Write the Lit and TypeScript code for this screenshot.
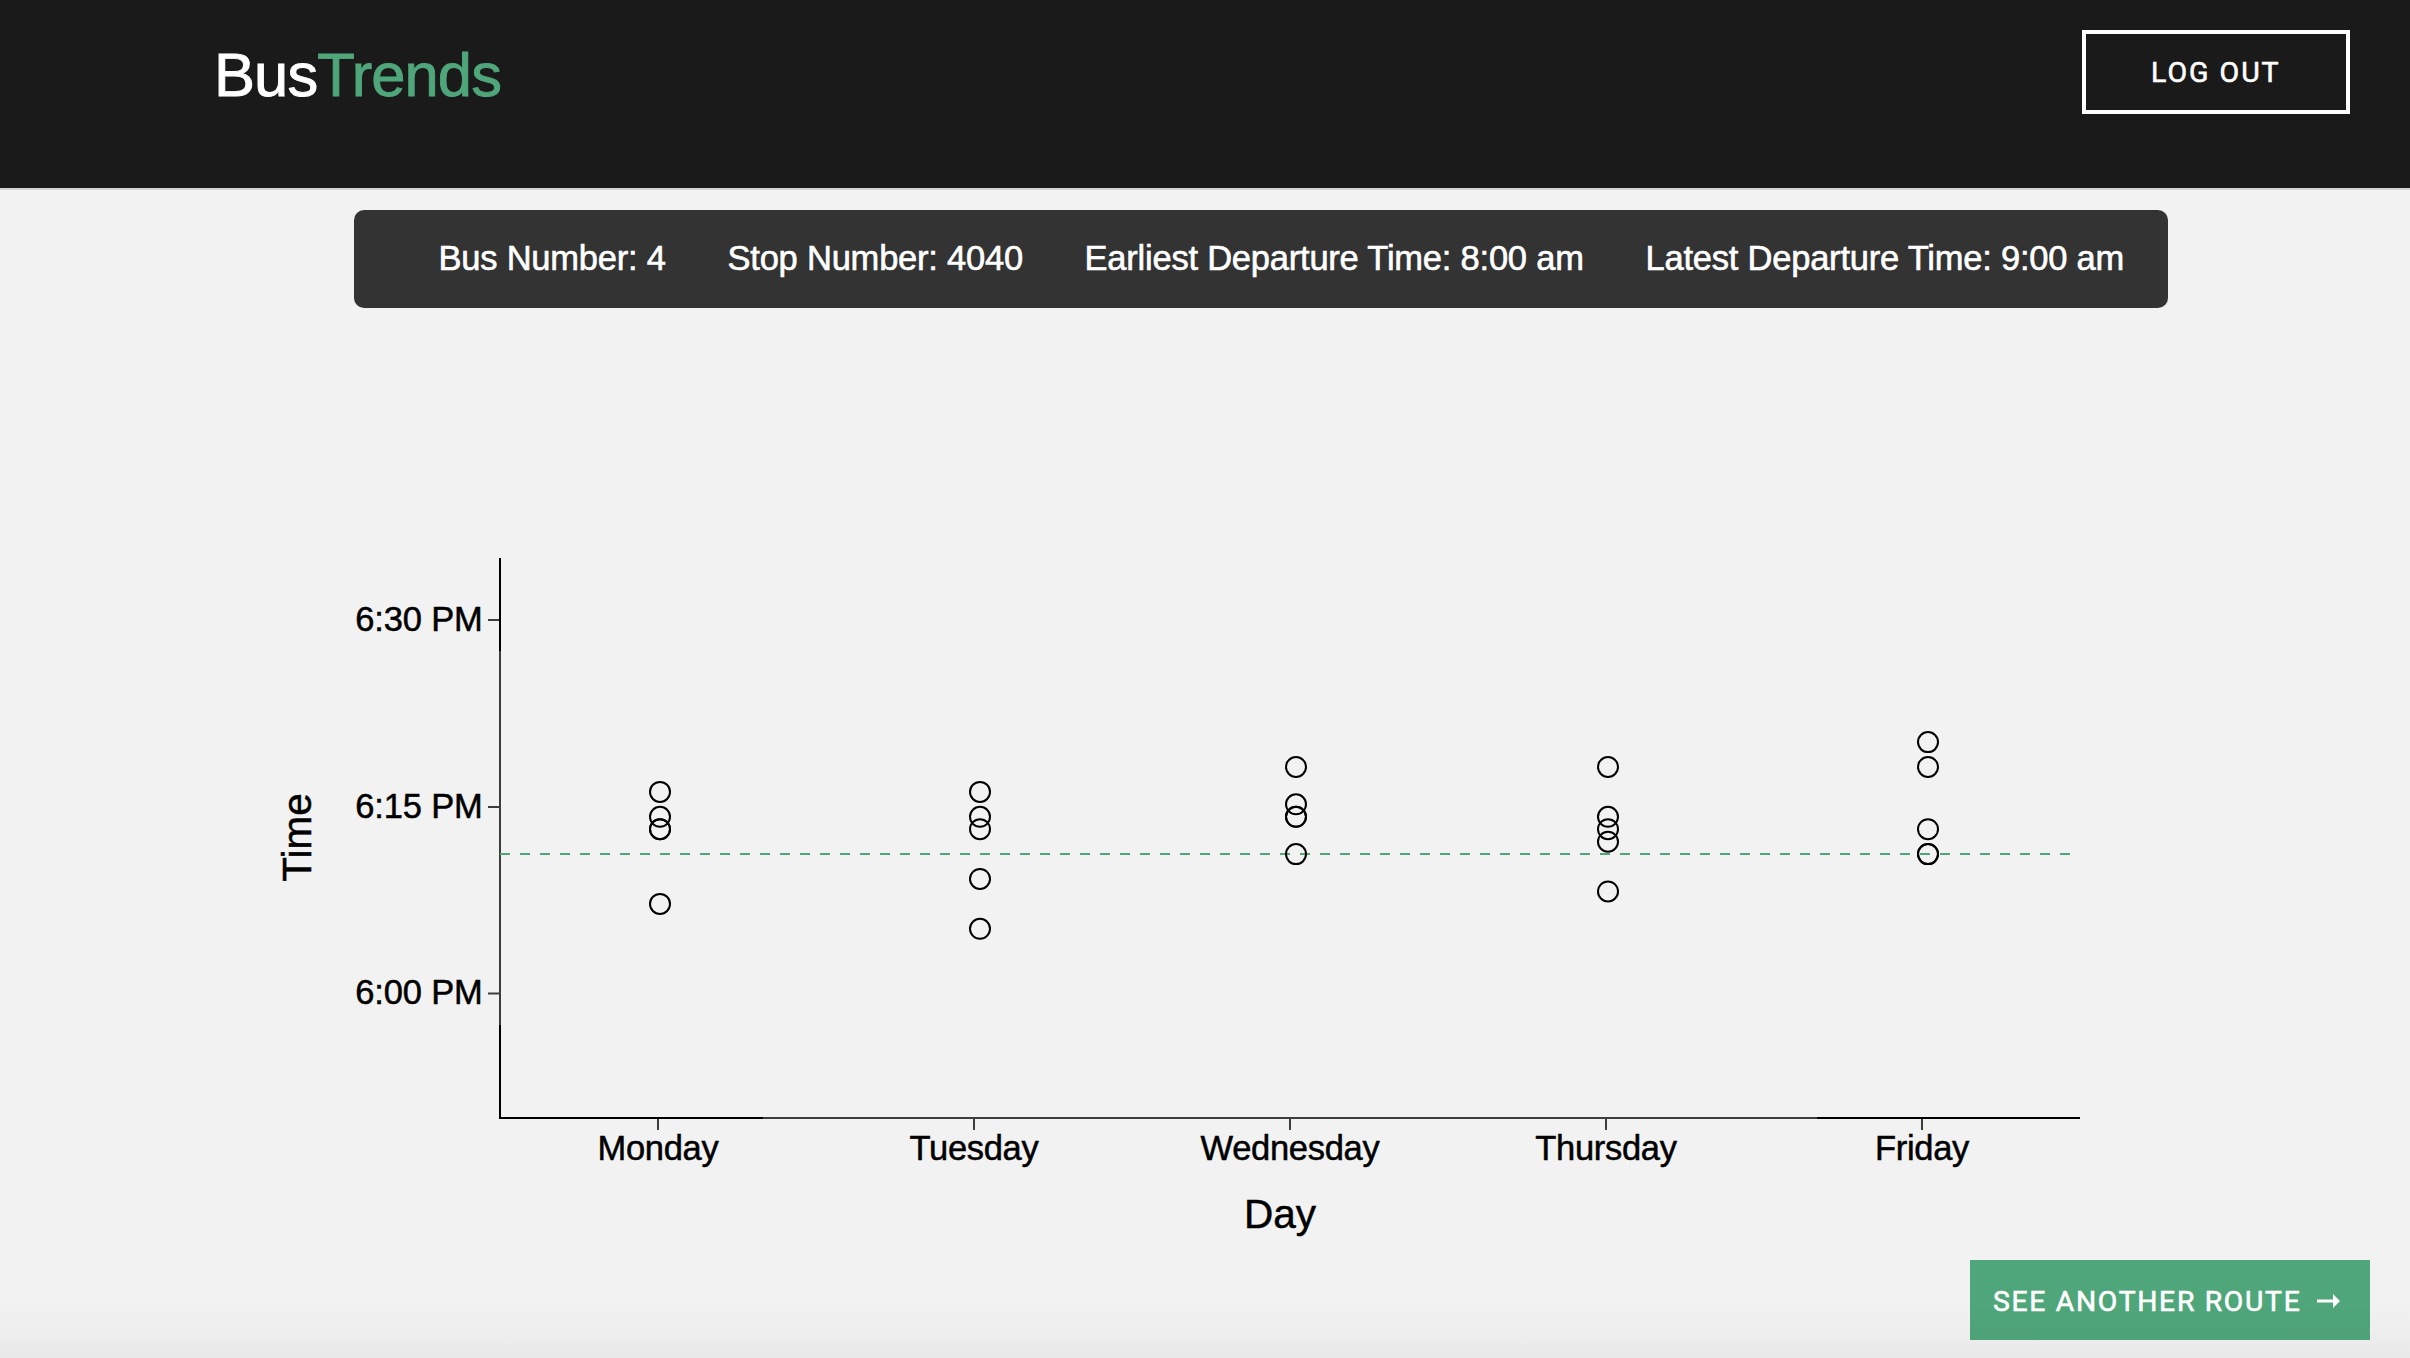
import { LitElement, html, svg, css } from "lit";
import { customElement } from "lit/decorators.js";

const SUMMARY = [
  ["Bus Number: 4", "bus"],
  ["Stop Number: 4040", "stop"],
  ["Earliest Departure Time: 8:00 am", "earliest"],
  ["Latest Departure Time: 9:00 am", "latest"],
];

/* Arrival samples: minutes past 6 PM for each weekday. */
const DAYS = [
  { name: "Monday", tick: 658, x: 660, minutes: [16, 14, 13, 13, 7] },
  { name: "Tuesday", tick: 974, x: 980, minutes: [16, 14, 13, 9, 5] },
  { name: "Wednesday", tick: 1290, x: 1296, minutes: [18, 15, 14, 14, 11] },
  { name: "Thursday", tick: 1606, x: 1608, minutes: [18, 14, 13, 12, 8] },
  { name: "Friday", tick: 1922, x: 1928, minutes: [20, 18, 13, 11, 11] },
];

const TIMES = [
  { label: "6:30 PM", y: 620 },
  { label: "6:15 PM", y: 807 },
  { label: "6:00 PM", y: 993.5 },
];

const AVERAGE_Y = 854;
const yOf = (minute: number) => AVERAGE_Y + 0.1 - (minute - 11) * 12.444;

@customElement("trend-chart")
class TrendChart extends LitElement {
  static styles = css`
    :host { display: block; }
    svg { display: block; width: 100%; height: 100%; }
    text {
      font-family: "Liberation Sans", Arial, sans-serif;
      fill: #000;
      stroke: #000;
      stroke-width: 0.5px;
    }
    .label { font-size: 34.5px; }
    .title { font-size: 40.5px; }
    .axis { stroke: #000; stroke-width: 2; }
    .soft { stroke: #3d3d3d; stroke-width: 2; }
    .average { stroke: #4fa67a; stroke-width: 2; stroke-dasharray: 10 10; }
    .dot { fill: none; stroke: #000; stroke-width: 2; }
  `;

  render() {
    return html`<svg viewBox="0 308 2410 1050">
      <path class="axis" d="M500 558V651M500 1025V1119M499 1118H763M1817 1118H2080" />
      <path class="soft" d="M500 651V1025M763 1118H1817" />
      ${TIMES.map(
        (t) => svg`<path class="soft" d=${`M488 ${t.y}H499`} />
          <text class="label" x="355.2" y=${t.y + 10.7} textLength="127.6" lengthAdjust="spacing">${t.label}</text>`
      )}
      ${DAYS.map(
        (d) => svg`<path class="soft" d=${`M${d.tick} 1119V1130`} />
          <text class="label" x=${d.tick} y="1160" text-anchor="middle" letter-spacing="-0.3">${d.name}</text>`
      )}
      <path class="average" d="M500 854H2074" />
      ${DAYS.map((d) =>
        d.minutes.map((m) => svg`<circle class="dot" cx=${d.x} cy=${yOf(m)} r="10" />`)
      )}
      <text class="title" x="1280" y="1228" text-anchor="middle">Day</text>
      <text class="title" transform="translate(311 837.5) rotate(-90)" text-anchor="middle">Time</text>
    </svg>`;
  }
}

@customElement("app-root")
class AppRoot extends LitElement {
  static styles = css`
    :host {
      display: flex;
      flex-direction: column;
      box-sizing: border-box;
      position: relative;
      height: 1358px;
      overflow: hidden;
      background: #f2f2f2;
      font-family: "Liberation Sans", Arial, sans-serif;
    }
    header {
      display: flex;
      justify-content: space-between;
      align-items: flex-start;
      flex: none;
      box-sizing: border-box;
      height: 190px;
      padding: 30px 60px 0 214px;
      background: #1a1a1a;
      border-bottom: 2px solid #d2d2d2;
    }
    .logo {
      margin-top: 10px;
      font-size: 61.5px;
      line-height: 70px;
      letter-spacing: -0.9px;
      color: #fff;
      -webkit-text-stroke: 0.9px currentColor;
    }
    .logo .accent { color: #4fa67a; }
    button {
      box-sizing: border-box;
      margin: 0;
      padding: 0;
      display: flex;
      align-items: center;
      border: 0;
      border-radius: 0;
      color: #fff;
      font-family: Roboto, sans-serif;
      font-weight: 400;
      font-size: 28.5px;
      line-height: 34px;
      text-align: left;
      white-space: nowrap;
      -webkit-text-stroke: 0.6px currentColor;
    }
    .logout {
      width: 268px;
      height: 84px;
      padding: 2px 0 0 65px;
      border: 4px solid #fff;
      background: transparent;
      letter-spacing: 2px;
    }
    .summary {
      display: flex;
      flex: none;
      box-sizing: border-box;
      width: 1814px;
      height: 98px;
      margin: 20px 0 0 354px;
      padding: 0 0 3px 84.5px;
      align-items: center;
      border-radius: 10px;
      background: #333;
      color: #fff;
      font-size: 34.5px;
      line-height: 40px;
      letter-spacing: -0.22px;
      white-space: nowrap;
      -webkit-text-stroke: 0.6px currentColor;
    }
    .bus { width: 289px; }
    .stop { width: 357px; }
    .earliest { width: 561px; }
    trend-chart { flex: none; height: 1050px; }
    .another {
      position: absolute;
      right: 40px;
      bottom: 18px;
      width: 400px;
      height: 80px;
      padding: 4px 0 0 23px;
      background: #4fa67a;
      font-size: 28.3px;
      letter-spacing: 1.7px;
    }
    .caption { width: 324px; }
    .arrow { width: 23px; height: 14px; margin-top: -3px; }
    .fade {
      position: absolute;
      left: 0;
      right: 0;
      bottom: 0;
      height: 58px;
      pointer-events: none;
      background: linear-gradient(rgba(0, 0, 0, 0), rgba(0, 0, 0, 0.015) 50%, rgba(0, 0, 0, 0.04));
    }
  `;

  render() {
    return html`
      <header>
        <div class="logo">Bus<span class="accent">Trends</span></div>
        <button class="logout">LOG OUT</button>
      </header>
      <div class="summary">
        ${SUMMARY.map(([text, name]) => html`<span class=${name}>${text}</span>`)}
      </div>
      <trend-chart></trend-chart>
      <button class="another">
        <span class="caption">SEE ANOTHER ROUTE</span>
        <svg class="arrow" viewBox="0 0 23 14">
          <path d="M0 5.5H16V0L23 7L16 14V8.5H0Z" fill="#fff" />
        </svg>
      </button>
      <div class="fade"></div>
    `;
  }
}
